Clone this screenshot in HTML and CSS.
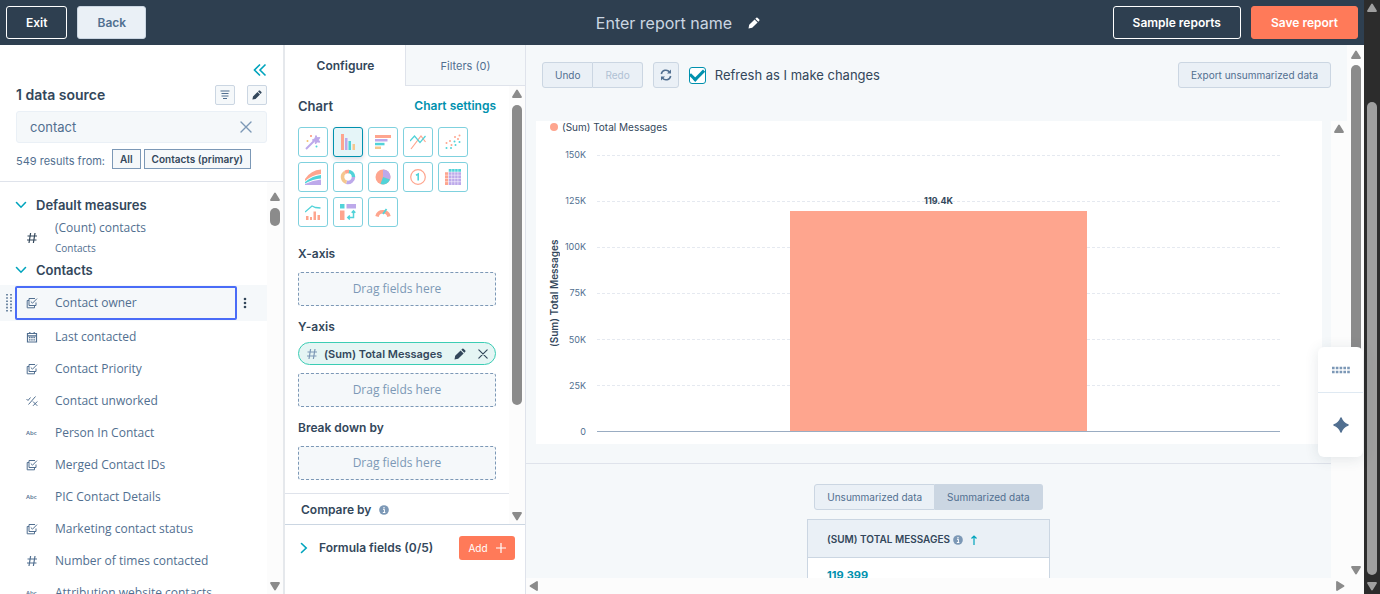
FILE: index.html
```html
<!DOCTYPE html>
<html lang="en">
<head>
    <meta charset="utf-8">
    <title>Report builder</title>
    <link rel="stylesheet" href="styles.css">
</head>
<body>
    <svg class="sprite" aria-hidden="true">
        <symbol id="pencil" viewBox="0 0 12 12"><path fill="currentColor" d="M.5 11.500l.7-3.700L6.600 2.400l3 3-5.400 5.400zM7.300 1.700l1-1q.6-.5 1.200 0l1.800 1.800q.5.600 0 1.200l-1 1z"/></symbol>
        <symbol id="close" viewBox="0 0 12 12"><path d="M1 1l10 10M11 1L1 11" fill="none" stroke="currentColor" stroke-width="1.400" stroke-linecap="round"/></symbol>
        <symbol id="chevron" viewBox="0 0 12 12"><path d="M1.500 3.500L6 8.200l4.500-4.700" fill="none" stroke="currentColor" stroke-width="1.600" stroke-linecap="round"/></symbol>
        <symbol id="hash" viewBox="0 0 12 12"><path d="M4.600 1L3 11M9 1L7.400 11M1.500 4h9.500M1 8h9.500" fill="none" stroke="currentColor" stroke-width="1.200"/></symbol>
        <symbol id="check-list" viewBox="0 0 12 12"><path d="M9 1.500H3v7h7V5.500M3 3.500H1.200v7.300h7.300V8.500M4.800 4.500l1.700 1.700L11 1.600" fill="none" stroke="currentColor"/></symbol>
        <symbol id="calendar" viewBox="0 0 12 12"><path d="M1.500 2.500h9V11h-9zM1.500 4.800h9M3.800 1v2M8.200 1v2" fill="none" stroke="currentColor" stroke-width="1.200"/><path d="M3 6.500h6M3 8.800h6" fill="none" stroke="currentColor" stroke-width="1.300" stroke-dasharray="1.500 .7"/></symbol>
        <symbol id="yes-no" viewBox="0 0 12 12"><path d="M.5 4l1.500 1.500L4.500 2.500M2.500 9.500L9.500 1.500M7 6.500l4.300 4.300M11.300 6.500L7 10.800" fill="none" stroke="currentColor"/></symbol>
        <symbol id="info" viewBox="0 0 12 12"><circle cx="6" cy="6" r="5.800" fill="#7c98b6"/><path d="M4.800 5.200h1.700v3.600M4.600 9h3" fill="none" stroke="#fff" stroke-width="1.200"/><circle cx="6" cy="3.200" r=".9" fill="#fff"/></symbol>
        <symbol id="arrow" viewBox="0 0 12 12"><path d="M6 2.500L10 9H2z" fill="currentColor" stroke="currentColor" stroke-width="1.800" stroke-linejoin="round"/></symbol>
    </svg>

    <div class="page">
        <div class="app">
            <header class="topbar">
                <div class="topbar-left">
                    <button class="btn btn-outline" type="button">Exit</button>
                    <button class="btn btn-light" type="button">Back</button>
                </div>
                <div class="report-name">
                    <h1>Enter report name</h1>
                    <button class="icon-btn" type="button" aria-label="Edit name"><svg class="icon"><use href="#pencil"/></svg></button>
                </div>
                <div class="topbar-right">
                    <button class="btn btn-outline" type="button">Sample reports</button>
                    <button class="btn btn-primary" type="button">Save report</button>
                </div>
            </header>

            <div class="workspace">
                <aside class="sources">
                    <div class="sources-head">
                        <button class="icon-btn collapse" type="button" aria-label="Collapse">
                            <svg width="14" height="14" viewBox="0 0 14 14"><path d="M7 1.500L1.500 7 7 12.500M12.500 1.500L7 7l5.500 5.500" fill="none" stroke="currentColor" stroke-width="1.600"/></svg>
                        </button>
                        <div class="sources-title">
                            <h2>1 data source</h2>
                            <button class="square-btn" type="button" aria-label="Filter">
                                <svg width="12" height="12" viewBox="0 0 12 12"><path d="M1.500 2h9M2.500 4.500h7M2.500 7h7M4 9.500h4" stroke="#516f90" stroke-width="1.200"/></svg>
                            </button>
                            <button class="square-btn" type="button" aria-label="Edit sources"><svg class="icon-sm"><use href="#pencil"/></svg></button>
                        </div>
                        <div class="search">
                            <input type="text" value="contact" aria-label="Search fields">
                            <button class="icon-btn" type="button" aria-label="Clear"><svg class="icon"><use href="#close"/></svg></button>
                        </div>
                        <div class="results">
                            <span>549 results from:</span>
                            <button class="chip" type="button">All</button>
                            <button class="chip" type="button">Contacts (primary)</button>
                        </div>
                    </div>

                    <div class="sources-body">
                        <div class="field-list">
                            <h3 class="group"><svg class="icon"><use href="#chevron"/></svg>Default measures</h3>
                            <div class="field field-tall">
                                <svg class="icon dark"><use href="#hash"/></svg>
                                <span>(Count) contacts<small>Contacts</small></span>
                            </div>
                            <h3 class="group group-next"><svg class="icon"><use href="#chevron"/></svg>Contacts</h3>
                            <div class="field-active">
                                <svg class="grip" width="6" height="20" viewBox="0 0 6 20"><path d="M1 1v18M5 1v18" stroke="#516f90" stroke-width="1.600" stroke-dasharray="1.600 1.600"/></svg>
                                <button class="field-focus" type="button"><svg class="icon"><use href="#check-list"/></svg>Contact owner</button>
                                <button class="icon-btn more" type="button" aria-label="More">
                                    <svg width="4" height="12" viewBox="0 0 4 12" fill="currentColor"><circle cx="2" cy="2" r="1.300"/><circle cx="2" cy="6" r="1.300"/><circle cx="2" cy="10" r="1.300"/></svg>
                                </button>
                            </div>
                            <div class="field"><svg class="icon"><use href="#calendar"/></svg>Last contacted</div>
                            <div class="field"><svg class="icon"><use href="#check-list"/></svg>Contact Priority</div>
                            <div class="field"><svg class="icon"><use href="#yes-no"/></svg>Contact unworked</div>
                            <div class="field"><span class="abc">Abc</span>Person In Contact</div>
                            <div class="field"><svg class="icon"><use href="#check-list"/></svg>Merged Contact IDs</div>
                            <div class="field"><span class="abc">Abc</span>PIC Contact Details</div>
                            <div class="field"><svg class="icon"><use href="#check-list"/></svg>Marketing contact status</div>
                            <div class="field"><svg class="icon"><use href="#hash"/></svg>Number of times contacted</div>
                            <div class="field"><span class="abc">Abc</span>Attribution website contacts</div>
                        </div>
                        <div class="scrollbar">
                            <svg class="icon"><use href="#arrow"/></svg>
                            <div class="track"><div class="thumb" style="height: 5%"></div></div>
                            <svg class="icon down"><use href="#arrow"/></svg>
                        </div>
                    </div>
                </aside>

                <section class="config">
                    <nav class="tabs">
                        <button class="tab active" type="button">Configure</button>
                        <button class="tab" type="button">Filters (0)</button>
                    </nav>
                    <div class="config-body">
                        <div class="config-content">
                            <div class="config-form">
                                <div class="chart-head">
                                    <h2>Chart</h2>
                                    <a href="#settings">Chart settings</a>
                                </div>
                                <div class="chart-types">
                                    <button type="button" aria-label="Automatic"><svg viewBox="0 0 16 16"><path d="M1 15L9 7" stroke="#bda9ea" stroke-width="2"/><path d="M11 1.500l1 2.300 2.800-.3-1.300 2.400 1.300 2.300-2.700-.3L10.500 10 10 7.200 7.300 6l2.500-1.300z" fill="#bda9ea" stroke="#bda9ea"/><circle cx="6" cy="2" r="1" fill="#ff8f73"/><circle cx="2.500" cy="7" r="1" fill="#f5c26b"/><circle cx="11.500" cy="12.500" r="1" fill="#51d3d9"/></svg></button>
                                    <button class="selected" type="button" aria-label="Column"><svg viewBox="0 0 16 16"><path d="M1 0h3v16H1z" fill="#fea58e"/><path d="M5 4h2.500v12H5z" fill="#bda9ea"/><path d="M8.500 7H11v9H8.500z" fill="#51d3d9"/><path d="M12.500 10H15v6h-2.500z" fill="#f5c78e"/></svg></button>
                                    <button type="button" aria-label="Bar"><svg viewBox="0 0 16 16"><path d="M0 1h16v3H0z" fill="#fea58e"/><path d="M0 5h12.500v2.500H0z" fill="#bda9ea"/><path d="M0 8.800h9.500v2.500H0z" fill="#51d3d9"/><path d="M0 12.500h6V15H0z" fill="#f5c78e"/></svg></button>
                                    <button type="button" aria-label="Line"><svg viewBox="0 0 16 16" fill="none" stroke-width="1.200"><path d="M1 15L11 2l4.500 6" stroke="#fea58e"/><path d="M0 7l4.500-5L10 8.500 15.500 2" stroke="#51d3d9"/></svg></button>
                                    <button type="button" aria-label="Scatter"><svg viewBox="0 0 16 16"><g fill="#fea58e"><circle cx="1.500" cy="9" r="1"/><circle cx="5" cy="7" r="1"/><circle cx="6.500" cy="11" r="1"/><circle cx="10" cy="3" r="1"/><circle cx="14.500" cy="1.500" r="1"/><circle cx="13" cy="5" r="1"/></g><g fill="#51d3d9"><circle cx="1.500" cy="14" r="1"/><circle cx="6" cy="14" r="1"/><circle cx="9.500" cy="7.500" r="1"/><circle cx="10.500" cy="11" r="1"/><circle cx="14.500" cy="8" r="1"/></g></svg></button>
                                    <button type="button" aria-label="Area"><svg viewBox="0 0 16 16"><path d="M0 10Q6 1 16 .5V5Q7 6 0 12z" fill="#fea58e"/><path d="M0 13Q8 6.500 16 6v3.500Q8 10 0 14.500z" fill="#51d3d9"/><path d="M0 15Q8 11 16 10.500V16H0z" fill="#bda9ea"/></svg></button>
                                    <button type="button" aria-label="Donut"><svg viewBox="0 0 16 16" fill="none" stroke-width="3.500"><path d="M8 2.500A5.500 5.500 0 0 1 13.500 8" stroke="#51d3d9"/><path d="M13.500 8a5.500 5.500 0 0 1-7 5.300" stroke="#bda9ea"/><path d="M6.500 13.300A5.500 5.500 0 0 1 5 3.400" stroke="#f5c78e"/><path d="M5 3.400a5.500 5.500 0 0 1 4-.8" stroke="#fea58e"/></svg></button>
                                    <button type="button" aria-label="Pie"><svg viewBox="0 0 16 16"><circle cx="8" cy="8" r="7.500" fill="#fea58e"/><path d="M8 8V.5A7.500 7.500 0 0 1 15 10.500z" fill="#bda9ea"/><path d="M8 8l7 2.500A7.500 7.500 0 0 1 5.500 15z" fill="#51d3d9"/></svg></button>
                                    <button type="button" aria-label="Summary"><svg viewBox="0 0 16 16" fill="none"><circle cx="8" cy="8" r="7.300" stroke="#fea58e" stroke-width="1.200"/><path d="M6 6.200L8.200 5v6.500" stroke="#51d3d9" stroke-width="1.600"/></svg></button>
                                    <button type="button" aria-label="Table"><svg viewBox="0 0 16 16"><path d="M3.500 0H16v3H3.500z" fill="#51d3d9"/><path d="M0 3h3.500v13H0z" fill="#fea58e"/><path d="M3.500 3H16v13H3.500z" fill="#bda9ea"/><path d="M3.500 0v16M6.700 0v16M9.800 0v16M12.900 0v16M0 3h16M0 6.200h16M0 9.500h16M0 12.700h16" stroke="#fff" stroke-width=".5"/></svg></button>
                                    <button type="button" aria-label="Combination"><svg viewBox="0 0 16 16"><path d="M0 8l7-6 3.500 1.500 5 .5" fill="none" stroke="#51d3d9" stroke-width="1.300"/><path d="M1 12h2.500v4H1zM5 13h2v3H5zM8.500 7.500H11V16H8.500zM12.500 11H15v5h-2.500z" fill="#fea58e"/></svg></button>
                                    <button type="button" aria-label="Pivot"><svg viewBox="0 0 16 16"><path d="M0 0h4.500v4.500H0z" fill="#51d3d9"/><path d="M6.500 0H16v4.500H6.500z" fill="#bda9ea"/><path d="M0 6.500h4.500V16H0z" fill="#fea58e"/><path d="M13.500 7v6.500H8M9.800 11.500l-2 2 2 2M11.700 8.800l1.800-2 1.800 2" fill="none" stroke="#51d3d9" stroke-width="1.500"/></svg></button>
                                    <button type="button" aria-label="Gauge"><svg viewBox="0 0 16 16" fill="none"><path d="M2 12.500a6.200 6.200 0 0 1 12 0" stroke="#fea58e" stroke-width="3.500"/><path d="M8 10l3.500-5" stroke="#51d3d9" stroke-width="1.800"/></svg></button>
                                </div>

                                <h3>X-axis</h3>
                                <div class="dropzone">Drag fields here</div>

                                <h3>Y-axis</h3>
                                <div class="pill">
                                    <svg class="icon pill-type"><use href="#hash"/></svg>
                                    <span>(Sum) Total Messages</span>
                                    <button class="icon-btn" type="button" aria-label="Edit field"><svg class="icon"><use href="#pencil"/></svg></button>
                                    <button class="icon-btn" type="button" aria-label="Remove field"><svg class="icon-sm"><use href="#close"/></svg></button>
                                </div>
                                <div class="dropzone">Drag fields here</div>

                                <h3>Break down by</h3>
                                <div class="dropzone">Drag fields here</div>
                            </div>
                            <h3 class="compare">Compare by <svg class="icon-sm"><use href="#info"/></svg></h3>
                        </div>
                        <div class="scrollbar">
                            <svg class="icon"><use href="#arrow"/></svg>
                            <div class="track"><div class="thumb" style="height: 75%"></div></div>
                            <svg class="icon down"><use href="#arrow"/></svg>
                        </div>
                    </div>
                    <div class="formula">
                        <svg class="icon turn"><use href="#chevron"/></svg>
                        <h3>Formula fields (0/5)</h3>
                        <button class="btn-add" type="button">Add
                            <svg width="10" height="10" viewBox="0 0 10 10"><path d="M5 0v10M0 5h10" stroke="currentColor" stroke-width="1.200"/></svg>
                        </button>
                    </div>
                </section>

                <main class="preview">
                    <div class="preview-top">
                        <div class="preview-main">
                            <div class="toolbar">
                                <div class="btn-group">
                                    <button class="btn-small" type="button">Undo</button>
                                    <button class="btn-small" type="button" disabled>Redo</button>
                                </div>
                                <button class="btn-small refresh" type="button" aria-label="Refresh">
                                    <svg width="12" height="12" viewBox="0 0 12 12"><path d="M1.300 5A4.700 4.700 0 0 1 9.600 3M10.700 7a4.700 4.700 0 0 1-8.300 2" fill="none" stroke="currentColor" stroke-width="1.500"/><path d="M11 .5v4H7zM1 11.500v-4h4z" fill="currentColor"/></svg>
                                </button>
                                <label class="auto-refresh"><input type="checkbox" checked>Refresh as I make changes</label>
                                <button class="btn-small export" type="button">Export unsummarized data</button>
                            </div>

                            <div class="preview-body">
                                <div class="preview-content">
                                    <div class="chart-card">
                                        <div class="legend"><i></i>(Sum) Total Messages</div>
                                        <div class="chart">
                                            <div class="y-title">(Sum) Total Messages</div>
                                            <div class="y-labels">
                                                <span>150K</span><span>125K</span><span>100K</span><span>75K</span><span>50K</span><span>25K</span><span>0</span>
                                            </div>
                                            <div class="plot">
                                                <div class="gridline"></div>
                                                <div class="gridline"></div>
                                                <div class="gridline"></div>
                                                <div class="gridline"></div>
                                                <div class="gridline"></div>
                                                <div class="gridline"></div>
                                                <div class="bar" style="height: 79.6%"><span>119.4K</span></div>
                                            </div>
                                        </div>
                                    </div>
                                    <div class="data-panel">
                                        <div class="btn-group">
                                            <button class="btn-small" type="button">Unsummarized data</button>
                                            <button class="btn-small current" type="button">Summarized data</button>
                                        </div>
                                        <table>
                                            <thead><tr><th>(SUM) TOTAL MESSAGES <svg class="icon-sm"><use href="#info"/></svg><svg class="sort" width="8" height="10" viewBox="0 0 8 10"><path d="M4 10V1M1.500 3.500L4 1l2.500 2.500" fill="none" stroke="#00a4bd" stroke-width="1.200"/></svg></th></tr></thead>
                                            <tbody><tr><td><a href="#records">119,399</a></td></tr></tbody>
                                        </table>
                                    </div>
                                </div>
                                <div class="scrollbar">
                                    <svg class="icon"><use href="#arrow"/></svg>
                                </div>
                            </div>
                        </div>
                        <div class="scrollbar outer">
                            <svg class="icon"><use href="#arrow"/></svg>
                            <div class="track"><div class="thumb" style="height: 65%"></div></div>
                            <svg class="icon down"><use href="#arrow"/></svg>
                        </div>
                    </div>
                    <div class="scrollbar-x">
                        <svg class="icon left"><use href="#arrow"/></svg>
                        <svg class="icon right"><use href="#arrow"/></svg>
                    </div>
                </main>
            </div>

            <div class="helper">
                <button type="button" aria-label="Move">
                    <svg width="18" height="8" viewBox="0 0 18 8"><path d="M0 2h18M0 6h18" stroke="#7c98b6" stroke-width="2.500" stroke-dasharray="2.600 1.200"/></svg>
                </button>
                <button class="assistant" type="button" aria-label="Assistant">
                    <svg width="16" height="16" viewBox="0 0 16 16"><path d="M8 1Q9.800 6.200 15 8 9.800 9.800 8 15 6.200 9.800 1 8 6.200 6.200 8 1z" fill="#516f90" stroke="#516f90" stroke-width="1.500" stroke-linejoin="round"/></svg>
                </button>
            </div>
        </div>

        <div class="scrollbar page-scrollbar">
            <svg class="icon"><use href="#arrow"/></svg>
            <div class="track"><div class="thumb"></div></div>
            <svg class="icon down"><use href="#arrow"/></svg>
        </div>
    </div>
</body>
</html>
```

FILE: styles.css
```css
* { box-sizing: border-box; }
body { margin: 0; font-family: Inter, "Open Sans", sans-serif; font-size: 12px; line-height: 16px; color: #33475b; }
h1, h2, h3 { margin: 0; font-weight: 600; }
h3 { font-size: 12px; }
button { font: inherit; color: inherit; cursor: pointer; padding: 0; }
a { color: #0091ae; font-weight: 600; text-decoration: none; }
svg { flex: none; }
.sprite { position: absolute; width: 0; height: 0; }
.icon { width: 12px; height: 12px; }
.icon-sm { width: 10px; height: 10px; }
.icon-btn { display: flex; border: 0; background: none; }

.page { display: flex; height: 100vh; overflow: hidden; }
.app { flex: 1; min-width: 0; display: flex; flex-direction: column; position: relative; }

/* top bar */
.topbar { display: grid; grid-template-columns: 1fr auto 1fr; align-items: center; height: 45px; flex: none; padding: 0 6px; background: #2e3f50; }
.topbar-left, .topbar-right { display: flex; gap: 10px; }
.topbar-right { justify-content: flex-end; }
.report-name { display: flex; align-items: center; gap: 16px; padding-right: 8px; color: #fff; }
.report-name h1 { font-size: 16px; font-weight: 400; color: #cbd6e2; }
.btn { height: 33px; padding: 0 19px; border: 1px solid #fff; border-radius: 3px; font-weight: 600; color: #fff; }
.btn-outline { background: none; }
.btn-light { background: #eaf0f6; border-color: #cbd6e2; color: #516f90; }
.btn-primary { background: #ff7a59; border-color: #ff7a59; }

.workspace { flex: 1; min-height: 0; display: flex; }

/* scrollbars */
.scrollbar { width: 16px; flex: none; display: flex; flex-direction: column; align-items: center; padding: 2px 0; background: #fcfcfc; color: #8b8b8b; }
.track { flex: 1; width: 10px; padding: 5px 0; }
.thumb { border-radius: 5px; background: #8b8b8b; }
.down { transform: rotate(180deg); }
.left { transform: rotate(-90deg); }
.right { transform: rotate(90deg); }
.scrollbar-x { height: 16px; flex: none; display: flex; justify-content: space-between; align-items: center; padding: 0 18px 0 2px; background: #fcfcfc; color: #8b8b8b; }
.page-scrollbar { background: #2c2c2c; color: #9f9f9f; }
.page-scrollbar .track { padding: 88px 0 5px; display: flex; flex-direction: column; }
.page-scrollbar .thumb { flex: 1; background: #9f9f9f; }

/* data sources */
.sources { width: 285px; flex: none; display: flex; flex-direction: column; border-right: 2px solid #e5e8ec; background: #fff; }
.sources-head { padding: 18px 16px 12px; border-bottom: 1px solid #dfe3eb; }
.collapse { margin: 0 0 0 auto; color: #00a4bd; }
.sources-title { display: flex; align-items: center; gap: 12px; margin-top: 8px; }
.sources-title h2 { flex: 1; font-size: 14px; }
.square-btn { display: flex; align-items: center; justify-content: center; width: 20px; height: 20px; border: 1px solid #cbd6e2; border-radius: 2px; background: #f5f8fa; }
.search { display: flex; align-items: center; height: 32px; margin-top: 6px; padding: 0 14px 0 13px; border: 1px solid #eaf0f6; border-radius: 3px; background: #f5f8fa; color: #7c98b6; }
.search input { flex: 1; min-width: 0; padding: 0; border: 0; background: none; font: inherit; font-size: 13px; color: #516f90; }
.results { display: flex; align-items: center; gap: 3px; margin-top: 6px; color: #516f90; }
.results span { font-size: 11px; margin-right: 4px; padding-top: 4px; }
.chip { height: 20px; padding: 0 7px; border: 1px solid #7c98b6; background: #f5f8fa; font-size: 10px; font-weight: 600; line-height: 16px; color: #33475b; }
.sources-body { flex: 1; min-height: 0; display: flex; }
.sources-body .scrollbar { padding-top: 9px; }
.field-list { flex: 1; min-width: 0; overflow: hidden; padding-top: 15px; }
.group { display: flex; align-items: center; gap: 9px; padding-left: 15px; font-size: 13px; }
.group .icon { color: #00a4bd; }
.group-next { margin-bottom: 7px; }
.field, .field-focus { display: flex; align-items: center; gap: 17px; font-family: "Open Sans", sans-serif; color: #516f90; white-space: nowrap; }
.field { height: 32px; padding-left: 26px; }
.field-tall { height: 49px; }
.field small { display: block; margin-top: 4px; font-size: 10px; }
.dark { color: #33475b; }
.abc { width: 12px; font-size: 6px; font-weight: 600; }
.field-active { display: flex; align-items: center; height: 36px; padding-left: 6px; background: #f5f8fa; }
.field-focus { width: 222px; height: 34px; margin: 0 6px 0 3px; padding-left: 9px; border: 2px solid #4a6cf7; border-radius: 2px; background: none; }

/* configure panel */
.config { width: 241px; flex: none; display: flex; flex-direction: column; border-right: 1px solid #dfe3eb; background: #fff; }
.tabs { display: flex; height: 41px; flex: none; }
.tab { flex: 1; padding-top: 2px; border: 0; border-left: 1px solid #dfe3eb; border-bottom: 1px solid #dfe3eb; background: #f5f8fa; font-size: 11px; color: #516f90; }
.tab.active { border-color: #fff; background: #fff; font-size: 12px; font-weight: 600; color: #33475b; }
.config-body { flex: 1; min-height: 0; display: flex; }
.config-content { flex: 1; min-width: 0; overflow: hidden; }
.config-form { padding: 12px 13px 13px; border-bottom: 1px solid #dfe3eb; }
.chart-head { display: flex; justify-content: space-between; align-items: center; margin-bottom: 13px; }
.chart-head h2 { font-size: 13px; }
.chart-types { display: grid; grid-template-columns: repeat(5, 30px); gap: 5px; margin-bottom: 19px; }
.chart-types button { display: flex; align-items: center; justify-content: center; height: 30px; border: 1px solid #7fd1de; border-radius: 3px; background: #fff; }
.chart-types svg { width: 16px; height: 16px; }
.chart-types .selected { border-color: #0091ae; background: #e5f5f8; box-shadow: 0 2px 5px #d5dbe3; }
.dropzone { height: 34px; margin: 10px 0 13px; border: 1px dashed #7c98b6; border-radius: 3px; background: #f5f8fa; font-family: "Open Sans", sans-serif; line-height: 32px; text-align: center; color: #7c98b6; }
.dropzone:last-child { margin-bottom: 0; }
.pill { display: flex; align-items: center; gap: 12px; height: 23px; margin: 7px 0 0; padding: 0 9px 0 7px; border: 1px solid #3bcdb4; border-radius: 12px; background: #e5f5f4; }
.pill + .dropzone { margin-top: 8px; }
.pill span { flex: 1; margin-left: -6px; font-size: 11px; font-weight: 600; white-space: nowrap; }
.pill-type { color: #7c98b6; }
.compare { display: flex; align-items: center; gap: 8px; padding: 8px 16px; }
.formula { display: flex; align-items: center; height: 70px; flex: none; padding: 0 10px 24px 13px; border-top: 1px solid #cbd6e2; }
.formula h3 { flex: 1; margin-left: 9px; }
.turn { transform: rotate(-90deg); color: #00a4bd; }
.btn-add { display: flex; align-items: center; justify-content: center; gap: 8px; width: 56px; height: 24px; border: 0; border-radius: 3px; background: #ff7a59; font-size: 10px; color: #fff; }

/* preview */
.preview { flex: 1; min-width: 0; display: flex; flex-direction: column; background: #f5f8fa; }
.preview-top { flex: 1; min-height: 0; display: flex; }
.preview-main { flex: 1; min-width: 0; display: flex; flex-direction: column; }
.toolbar { display: flex; align-items: center; height: 60px; margin-bottom: 16px; flex: none; padding: 0 16px; }
.btn-group { display: flex; }
.btn-small { height: 26px; padding: 0 12px; border: 1px solid #cbd6e2; border-radius: 3px; background: #eaf0f6; font-size: 10px; color: #516f90; }
.btn-small:disabled { color: #b0c1d4; }
.btn-small.current { background: #cbd6e2; }
.btn-group .btn-small:first-child { border-radius: 3px 0 0 3px; }
.btn-group .btn-small:last-child { border-left: 0; border-radius: 0 3px 3px 0; }
.refresh { display: flex; align-items: center; margin: 0 10px; padding: 0 6px; }
.auto-refresh { display: flex; align-items: center; gap: 9px; font-size: 13px; }
.auto-refresh input { appearance: none; display: flex; justify-content: center; align-items: center; width: 17px; height: 17px; margin: 0; border: 1px solid #0091ae; border-radius: 3px; background: #fff; }
.auto-refresh input:checked::before { content: ""; width: 11px; height: 6px; margin-bottom: 3px; border: solid #0091ae; border-width: 0 0 3px 3px; transform: rotate(-45deg); }
.export { margin-left: auto; }
.preview-body { flex: 1; min-height: 0; display: flex; }
.preview-content { flex: 1; min-width: 0; overflow: hidden; }
.outer { width: 17px; padding-top: 4px; }
.outer .track { padding-top: 4px; }

.chart-card { margin: 0 9px 19px 10px; padding: 0 42px 6px 12px; background: #fff; font-size: 10px; }
.legend { display: flex; align-items: center; gap: 4px; height: 12px; margin-left: 2px; }
.legend i { width: 8px; height: 8px; border-radius: 50%; background: #fea58e; }
.chart { display: flex; height: 289px; margin-top: 16px; }
.y-title { writing-mode: vertical-rl; transform: rotate(180deg); width: 12px; line-height: 12px; font-weight: 600; text-align: center; }
.y-labels { width: 26px; margin-right: 11px; display: flex; flex-direction: column; justify-content: space-between; text-align: right; font-size: 9px; line-height: 12px; color: #516f90; }
.plot { flex: 1; position: relative; display: flex; flex-direction: column; margin: 6px 0; border-bottom: 1px solid #99acc2; }
.gridline { flex: 1; border-top: 1px dashed #e5e9f0; }
.bar { position: absolute; bottom: 0; left: 28.2%; right: 28.2%; background: #fea58e; text-align: center; }
.bar span { position: absolute; bottom: 100%; left: 0; right: 0; margin-bottom: 2px; font-size: 9px; font-weight: 700; }

.data-panel { display: flex; flex-direction: column; align-items: center; padding-top: 20px; border-top: 1px solid #dfe3eb; }
table { width: 243px; margin-top: 9px; border-collapse: collapse; background: #fff; }
th, td { padding: 9px 19px; border: 1px solid #cbd6e2; text-align: left; }
th { height: 38px; background: #eaf0f6; font-size: 10px; font-weight: 600; }
th svg { vertical-align: middle; }
.sort { margin-left: 7px; }
td a { font-size: 11px; font-weight: 700; }

/* floating helper */
.helper { position: absolute; top: 347px; right: 1px; width: 45px; border-radius: 6px; background: #fff; box-shadow: 0 2px 14px rgba(45, 62, 80, .12); }
.helper button { display: flex; align-items: center; justify-content: center; width: 100%; height: 46px; border: 0; border-bottom: 1px solid #dfe9f2; background: none; }
.helper .assistant { height: 64px; border: 0; }
```
